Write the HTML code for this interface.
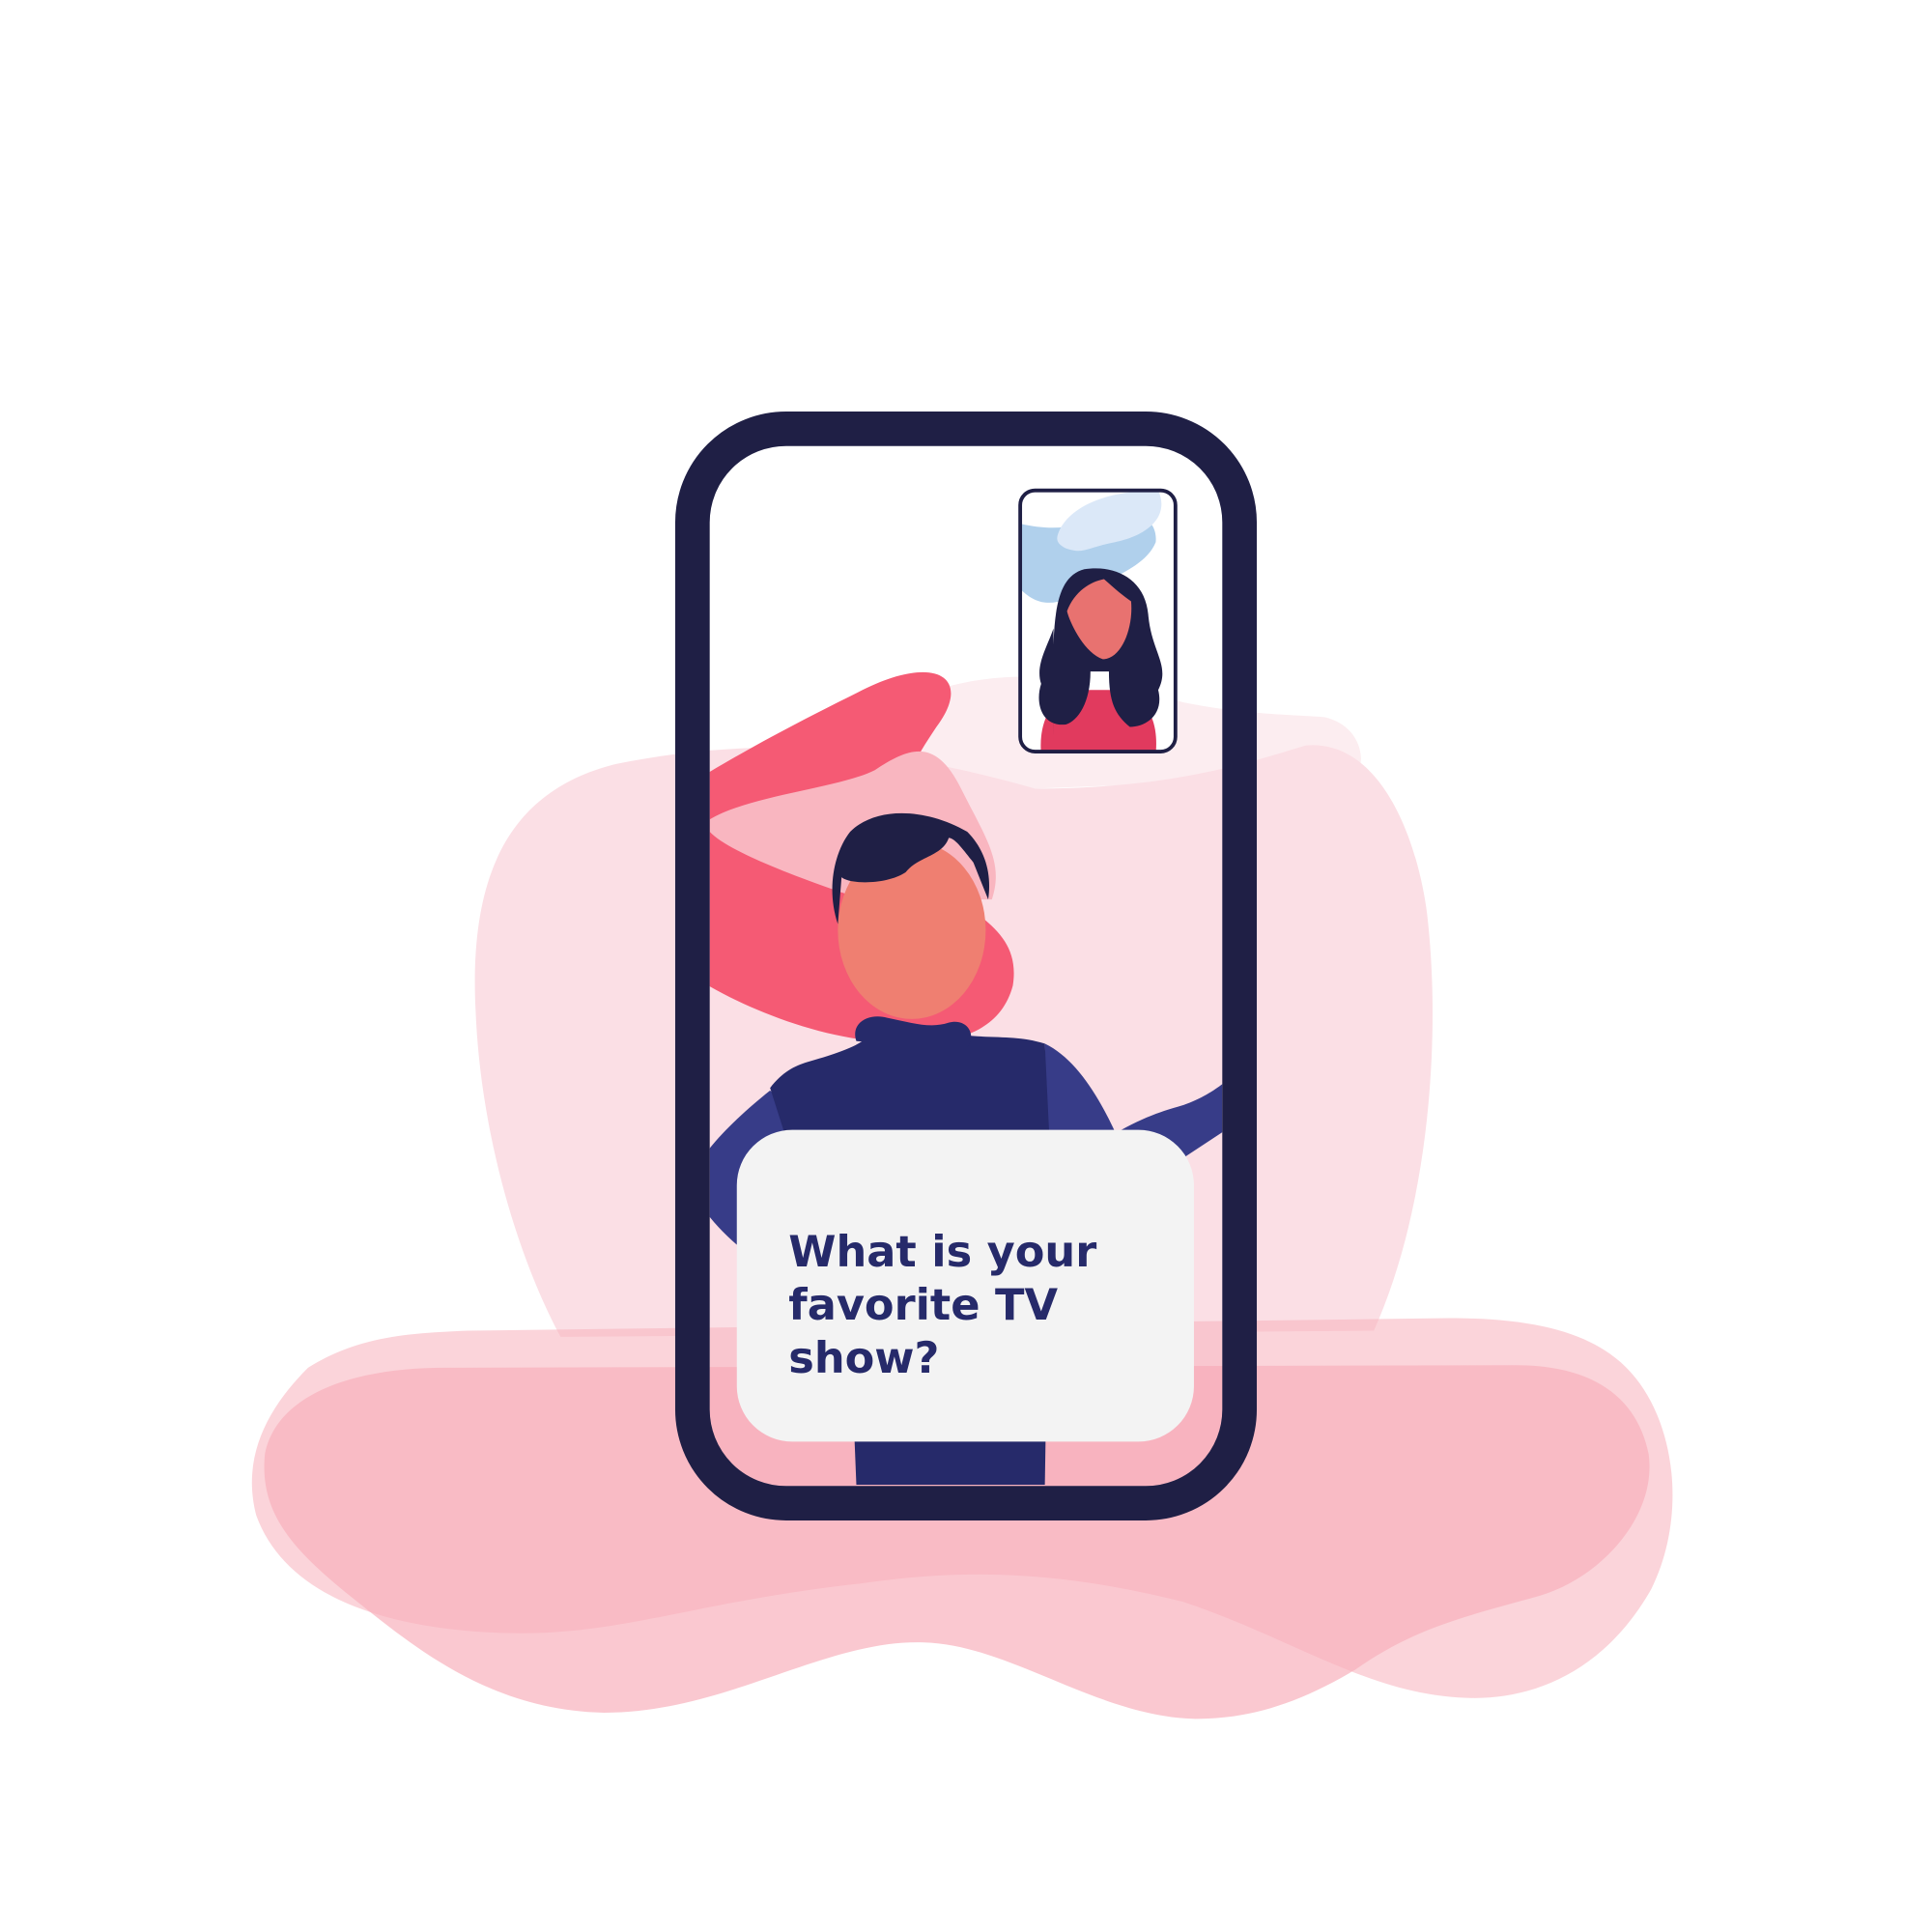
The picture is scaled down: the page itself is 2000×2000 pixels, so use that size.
<!DOCTYPE html>
<html><head><style>html,body{margin:0;padding:0;background:#fff}svg{display:block}</style></head>
<body>
<svg width="2000" height="2000" viewBox="0 0 1568 1568" xmlns="http://www.w3.org/2000/svg">
<defs><clipPath id="ph"><rect x="576" y="362" width="416" height="844" rx="62"/></clipPath>
<clipPath id="ins"><rect x="828" y="398" width="126" height="212" rx="12"/></clipPath></defs>
<path d="M760 560 C820 540 900 550 960 570 C1010 580 1050 580 1075 582 C1110 590 1110 630 1095 630 L840 640 L700 620 Z" fill="#fcedf0"/>
<path d="M500 620 C600 600 700 600 840 640 C950 640 1010 620 1060 605 C1120 600 1150 680 1158 740 C1170 840 1160 980 1115 1080 L455 1085 C420 1020 390 920 386 820 C380 700 420 640 500 620Z" fill="#fbdfe5"/>
<path d="M380 1080 L1160 1070 C1240 1068 1290 1080 1320 1110 C1360 1150 1370 1230 1340 1290 C1300 1360 1240 1380 1190 1378 C1110 1375 1050 1330 960 1300 C880 1280 800 1270 700 1285 C560 1300 500 1330 400 1325 C300 1320 230 1290 208 1230 C195 1180 220 1140 250 1110 C290 1085 330 1082 380 1080Z" fill="#f8b0bc" opacity="0.55"/>
<path d="M360 1110 L1230 1108 C1300 1108 1330 1140 1338 1180 C1345 1230 1300 1280 1250 1295 C1190 1312 1150 1320 1100 1355 C1050 1385 1010 1395 970 1395 C890 1393 820 1335 750 1333 C670 1330 590 1390 490 1390 C400 1388 340 1340 290 1300 C240 1260 210 1230 215 1180 C225 1130 290 1110 360 1110Z" fill="#f8b0bc" opacity="0.7"/>
<g clip-path="url(#ph)">
<rect x="576" y="362" width="416" height="844" fill="#fff"/>
<path d="M760 560 C820 540 900 550 960 570 C1010 580 1050 580 1075 582 L1095 630 L840 640 L700 620Z" fill="#fcedf0"/>
<path d="M500 620 C600 600 700 600 840 640 C950 640 1010 620 1060 605 C1120 600 1150 680 1158 740 C1170 840 1160 980 1115 1080 L455 1085Z" fill="#fbdfe5"/>
<path d="M380 1080 L1160 1070 L1200 1250 L380 1250Z" fill="#f9c6cf"/>
<path d="M360 1110 L1230 1108 L1230 1250 L360 1250Z" fill="#f8b3bf"/>
<path d="M570 630 C620 600 660 580 700 560 C760 530 790 550 760 590 C740 620 720 650 740 700 C780 740 830 750 822 800 C810 845 760 850 710 845 C660 840 610 820 575 800Z" fill="#f55a74"/>
<path d="M576 665 C610 645 680 640 710 625 C740 605 760 600 780 640 C800 680 815 700 805 730 L700 730 C640 710 590 690 576 675Z" fill="#f9b6c0"/>
<path d="M695 1205 L690 1080 L850 1080 L848 1205Z" fill="#262a6a"/>
<path d="M625 885 C600 905 580 925 570 940 L570 980 C585 1000 600 1015 640 1040 L660 920Z" fill="#373c88"/>
<path d="M905 920 C930 905 950 900 960 897 C980 890 992 880 998 875 L998 915 L960 940Z" fill="#373c88"/>
<path d="M848 847 C875 860 895 895 910 930 L850 930Z" fill="#373c88"/>
<path d="M625 883 C635 870 645 865 655 862 C680 855 700 848 705 840 L780 840 C810 843 825 840 848 847 L852 930 L640 930Z" fill="#262a6a"/>
<path d="M695 845 C690 830 705 822 720 826 C740 830 755 835 770 830 C785 826 793 840 785 850Z" fill="#262a6a"/>
<ellipse cx="740" cy="755" rx="60" ry="72" fill="#ef7f71"/>
<path d="M680 750 C670 720 678 690 690 675 C710 655 750 655 785 675 C800 690 805 710 802 730 L790 700 C782 690 775 680 770 680 C765 695 745 695 735 708 C720 718 690 718 683 712Z" fill="#1f1f45"/>
</g>
<rect x="562" y="348" width="444" height="872" rx="76" fill="none" stroke="#1f1f45" stroke-width="28"/>
<g clip-path="url(#ins)">
<rect x="828" y="398" width="126" height="212" fill="#fff"/>
<path d="M828 425 C850 430 870 430 890 420 C920 410 940 420 938 440 C930 460 900 470 880 480 C860 490 845 495 828 478Z" fill="#b0d0ec"/>
<path d="M860 430 C870 410 900 398 940 398 C950 420 930 435 905 440 C880 445 880 450 865 445 C855 440 858 435 860 430Z" fill="#dbe8f8"/>
<path d="M845 612 C843 590 850 570 870 560 L912 560 C935 570 940 590 938 612Z" fill="#e13a5e"/>
<path d="M855 600 C855 520 850 470 880 462 C905 458 930 470 932 500 C935 530 950 540 940 560 C945 580 930 590 917 590 C905 580 900 570 900 545 L885 545 C885 570 875 585 865 588 C845 590 840 570 845 555 C840 540 850 525 855 510 Z" fill="#1f1f45"/>
<path d="M866 496 C872 480 885 472 896 470 C905 478 912 484 918 488 C920 510 910 535 895 535 C880 530 868 505 866 496Z" fill="#e87270"/>
</g>
<rect x="828" y="398" width="126" height="212" rx="12" fill="none" stroke="#1f1f45" stroke-width="3"/>
<rect x="598" y="917" width="371" height="253" rx="45" fill="#f3f3f3"/>
<g font-family="'DejaVu Sans','Liberation Sans',sans-serif" font-weight="bold" font-size="35" fill="#262a6a">
<text x="640" y="1028">What is your</text>
<text x="640" y="1071">favorite TV</text>
<text x="640" y="1114">show?</text>
</g>
</svg>
</body></html>
